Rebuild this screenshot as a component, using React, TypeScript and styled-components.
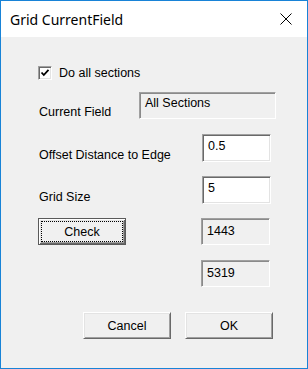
import React from "react";
import styled, { createGlobalStyle } from "styled-components";

const Global = createGlobalStyle`
  html, body { margin: 0; padding: 0; background: #ffffff; }
  * { box-sizing: border-box; }
`;

const Window = styled.div`
  width: 308px;
  height: 369px;
  border: 1px solid #1883d7;
  background: #f0f0f0;
  display: flex;
  flex-direction: column;
  font-family: "Liberation Sans", Arial, sans-serif;
  font-size: 12.5px;
  color: #000;
`;

const TitleBar = styled.div`
  height: 36px;
  background: #ffffff;
  display: flex;
  align-items: center;
  padding-left: 9px;
`;

const Title = styled.div`
  flex: 1;
  font-family: "Noto Sans", "Open Sans", sans-serif;
  font-size: 14px;
  color: #000;
`;

const CloseButton = styled.div`
  width: 42px;
  height: 100%;
  display: flex;
  align-items: center;
  justify-content: center;
`;

const Body = styled.div`
  padding: 29px 0 0 37px;
  display: flex;
  flex-direction: column;
`;

const Row = styled.div<{ $mt: number; $h: number; $ml?: number }>`
  margin-top: ${(p) => p.$mt}px;
  margin-left: ${(p) => p.$ml ?? 0}px;
  height: ${(p) => p.$h}px;
  display: flex;
  align-items: stretch;
`;

const Label = styled.div<{ $w: number }>`
  width: ${(p) => p.$w}px;
  padding-left: 1px;
  align-self: flex-end;
  line-height: 14px;
  white-space: nowrap;
`;

const CheckLabel = styled.label`
  display: flex;
  align-items: center;
  gap: 7px;
  line-height: 14px;
`;

const CheckBox = styled.span`
  width: 14px;
  height: 14px;
  background: #fff;
  border-top: 1px solid #a0a0a0;
  border-left: 1px solid #a0a0a0;
  border-right: 1px solid #ffffff;
  border-bottom: 1px solid #ffffff;
  box-shadow: inset 1px 1px 0 #696969, inset -1px -1px 0 #e3e3e3;
  display: flex;
  align-items: center;
  justify-content: center;
`;

const Field = styled.div<{ $w: number; $edit?: boolean; $pt: number }>`
  width: ${(p) => p.$w}px;
  background: ${(p) => (p.$edit ? "#ffffff" : "#f0f0f0")};
  border-top: 1px solid #a0a0a0;
  border-left: 1px solid #a0a0a0;
  border-right: 1px solid #ffffff;
  border-bottom: 1px solid #ffffff;
  box-shadow: ${(p) =>
    p.$edit
      ? "inset 1px 1px 0 #696969, inset -1px -1px 0 #e3e3e3"
      : "inset 1px 1px 0 #8a8a8a"};
  padding: ${(p) => p.$pt}px 0 0 5px;
  line-height: 14px;
  white-space: nowrap;
`;

const Spacer = styled.div<{ $w: number }>`
  width: ${(p) => p.$w}px;
  flex: none;
`;

const Button = styled.div<{ $default?: boolean }>`
  width: 88px;
  display: flex;
  align-items: center;
  justify-content: center;
  background: #f0f0f0;
  line-height: 14px;
  border: 1px solid ${(p) => (p.$default ? "#5a5a5a" : "transparent")};
  box-shadow: ${(p) =>
    p.$default
      ? "inset 1px 1px 0 #ffffff, inset -1px -1px 0 #696969, inset 2px 2px 0 #e3e3e3, inset -2px -2px 0 #a0a0a0"
      : "inset 1px 1px 0 #e3e3e3, inset -1px -1px 0 #a0a0a0"};
  ${(p) =>
    p.$default
      ? ""
      : "border-top-color: #ffffff; border-left-color: #ffffff; border-right-color: #696969; border-bottom-color: #696969;"}
`;

const FocusRing = styled.span`
  flex: 1;
  align-self: stretch;
  margin: 2px;
  border: 1px dotted #000;
  display: flex;
  align-items: center;
  justify-content: center;
`;

const ButtonRow = styled.div`
  margin-top: 25px;
  margin-left: 45px;
  height: 27px;
  display: flex;
  gap: 14px;
`;

export default function App() {
  return (
    <>
      <Global />
      <Window>
        <TitleBar>
          <Title>Grid CurrentField</Title>
          <CloseButton>
            <svg width="12" height="12" viewBox="0 0 12 12">
              <path d="M0.5 0.5 L11.5 11.5 M11.5 0.5 L0.5 11.5" stroke="#000" strokeWidth="1" fill="none" />
            </svg>
          </CloseButton>
        </TitleBar>
        <Body>
          <Row $mt={0} $h={14}>
            <CheckLabel>
              <CheckBox>
                <svg width="10" height="10" viewBox="0 0 10 10">
                  <path d="M1.5 4.5 L3.8 7 L8.5 1.8" stroke="#000" strokeWidth="1.8" fill="none" />
                </svg>
              </CheckBox>
              Do all sections
            </CheckLabel>
          </Row>
          <Row $mt={12} $h={27}>
            <Label $w={101}>Current Field</Label>
            <Field $w={137} $pt={3}>All Sections</Field>
          </Row>
          <Row $mt={15} $h={28}>
            <Label $w={164}>Offset Distance to Edge</Label>
            <Field $w={69} $edit $pt={4}>0.5</Field>
          </Row>
          <Row $mt={14} $h={28}>
            <Label $w={164}>Grid Size</Label>
            <Field $w={69} $edit $pt={4}>5</Field>
          </Row>
          <Row $mt={14} $h={27}>
            <Button $default>
              <FocusRing>Check</FocusRing>
            </Button>
            <Spacer $w={75} />
            <Field $w={69} $pt={5}>1443</Field>
          </Row>
          <Row $mt={15} $h={27} $ml={163}>
            <Field $w={69} $pt={5}>5319</Field>
          </Row>
          <ButtonRow>
            <Button>Cancel</Button>
            <Button>OK</Button>
          </ButtonRow>
        </Body>
      </Window>
    </>
  );
}
